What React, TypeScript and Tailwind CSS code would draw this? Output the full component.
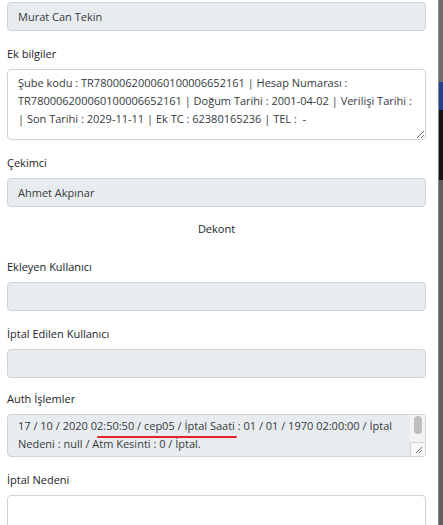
const font = { fontFamily: '"Open Sans", "Noto Sans", sans-serif' };

function Label({ children }: { children: React.ReactNode }) {
  return <div className="mb-[6px] h-[18px] text-[11px] leading-[18px] text-[#212529]">{children}</div>;
}

function ReadOnly({ value }: { value?: string }) {
  return (
    <div className="h-[29px] rounded-[4px] border border-[#ced4da] bg-[#e9ecef] px-[10px] text-[11px] leading-[27px] text-[#343a40]">
      {value}
    </div>
  );
}

export default function App() {
  return (
    <div className="flex h-[525px] w-[443px] overflow-hidden bg-white" style={font}>
      <div className="w-[439px] shrink-0 border-r border-[#8a8a8a] bg-white px-[7px] pt-[2px]">
        <div className="w-[419px]">
          <ReadOnly value="Murat Can Tekin" />

          <div className="mt-[14px]">
            <Label>Ek bilgiler</Label>
            <textarea
              readOnly
              className="block h-[71px] w-full resize rounded-[4px] border border-[#ced4da] bg-white px-[10px] py-[4px] text-[11px] leading-[18px] text-[#343a40] outline-none"
              defaultValue="Şube kodu : TR780006200060100006652161 | Hesap Numarası : TR780006200060100006652161 | Doğum Tarihi : 2001-04-02 | Verilişi Tarihi :  | Son Tarihi : 2029-11-11 | Ek TC : 62380165236 | TEL :  -"
            />
          </div>

          <div className="mt-[14px]">
            <Label>Çekimci</Label>
            <ReadOnly value="Ahmet Akpınar" />
          </div>

          <div className="mt-[13px] mb-[20px] h-[18px] text-center text-[11px] leading-[18px] text-[#212529]">Dekont</div>

          <div>
            <Label>Ekleyen Kullanıcı</Label>
            <ReadOnly />
          </div>

          <div className="mt-[14px]">
            <Label>İptal Edilen Kullanıcı</Label>
            <ReadOnly />
          </div>

          <div className="mt-[12px]">
            <Label>Auth İşlemler</Label>
            <div className="relative h-[43px] overflow-hidden rounded-[4px] border border-[#ced4da] bg-[#e9ecef]">
              <div className="pl-[10px] pr-[24px] pt-[2px] text-[11px] leading-[18px] text-[#343a40]">
                17 / 10 / 2020 02:50:50 / cep05 / İptal Saati : 01 / 01 / 1970 02:00:00 / İptal Nedeni : null / Atm Kesinti : 0 / İptal.
              </div>
              <div className="absolute left-[89px] top-[21px] h-[2px] w-[140px] rounded-full bg-[#e0262a]" />
              <div className="absolute right-0 top-0 flex h-full w-[15px] flex-col bg-[#f3f3f3]">
                <div className="flex flex-1 justify-center pt-[1px]">
                  <div className="h-[18px] w-[8px] rounded-full bg-[#bdbdbd]" />
                </div>
                <div className="relative h-[14px] border-l border-t border-[#d6d6d6] bg-[#f8f8f8]">
                  <svg className="absolute bottom-[2px] right-[2px]" width="8" height="8" viewBox="0 0 8 8">
                    <path d="M1 7 L7 1 M4 7 L7 4" stroke="#777" strokeWidth="1" />
                  </svg>
                </div>
              </div>
            </div>
          </div>

          <div className="mt-[14px]">
            <Label>İptal Nedeni</Label>
            <div className="h-[40px] rounded-[4px] border border-[#ced4da] bg-white" />
          </div>
        </div>
      </div>
      <div className="flex w-[4px] flex-col">
        <div className="h-[82px] bg-[#6e6e6e]" />
        <div className="h-[28px] bg-[#1f3f8f]" />
        <div className="h-[70px] bg-[#141414]" />
        <div className="flex-1 bg-[#5f5f5f]" />
      </div>
    </div>
  );
}
